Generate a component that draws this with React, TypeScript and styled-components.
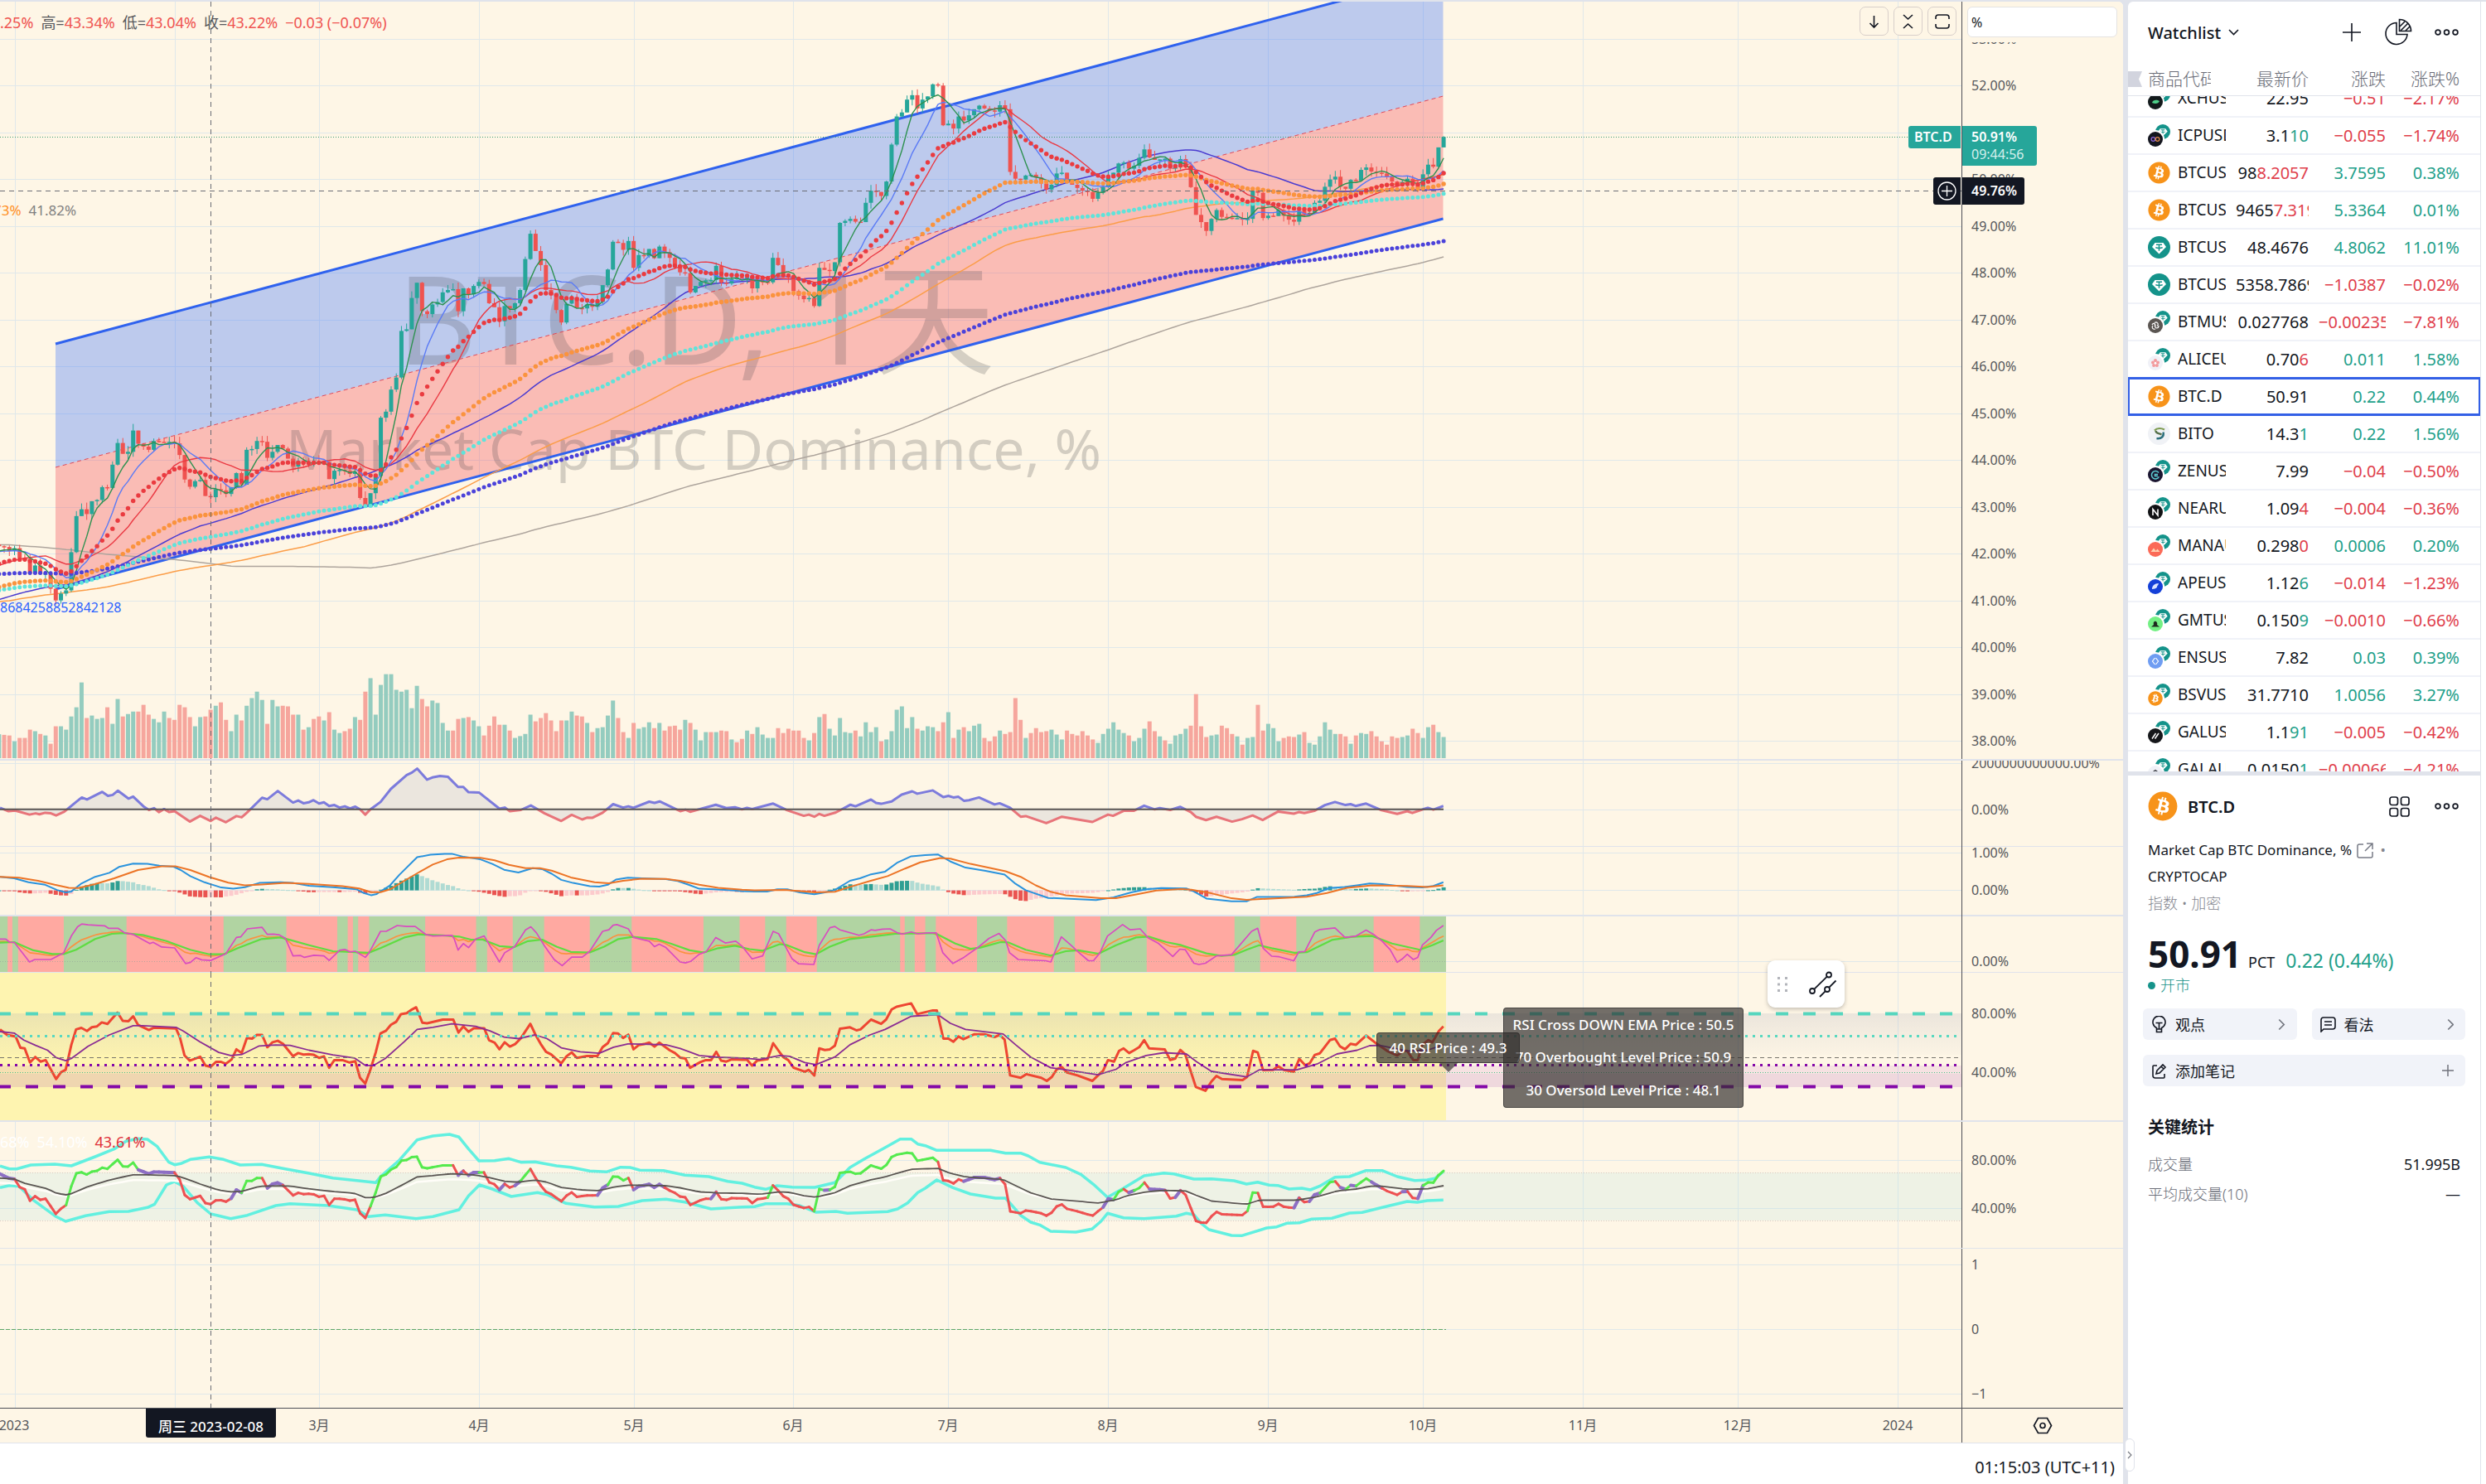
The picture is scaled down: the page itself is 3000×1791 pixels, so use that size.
import React from "react";
import styled, { createGlobalStyle, css } from "styled-components";
import { FaBitcoin } from "react-icons/fa";

/* ---------- theme ---------- */

const C = {
  cream: "#fef6e6",
  grid: "#e0e8ea",
  frame: "#e0e3eb",
  ink: "#131722",
  axis: "#4d4f57",
  label: "#55565b",
  up: "#26a69a",
  down: "#ef5350",
  textUp: "#22a08a",
  textDown: "#e0404c",
  blue: "#2962ff",
  muted: "#85878f",
};

const FONT = `"Noto Sans", "Noto Sans CJK SC", sans-serif`;

const Global = createGlobalStyle`
  * { box-sizing: border-box; }
  body { margin: 0; font-family: ${FONT}; color: ${C.ink}; background: ${C.frame}; }
  button, input { font-family: inherit; color: inherit; }
`;

/* ---------- series data ---------- */

type Pt = [number, number];

const DAY = 6.226;
const DAY0 = 17.5;
const FIRST = -3;
const LAST = 277;
const dayX = (d: number) => DAY0 + DAY * d;
const days = Array.from({ length: LAST - FIRST + 1 }, (_, i) => i + FIRST);

const parse = (s: string): Pt[] =>
  s.trim().split(/\s+/).map((p) => p.split(",").map(Number) as Pt);

const K_LEFT = 900 / 1568;
const K_RIGHT = 950 / 1568;

/* A series is stored as two blocks of samples; the second starts at x = 850. */
const series = (left: string, right: string, y0: number, ky: number): Pt[] => [
  ...parse(left).map(([x, y]) => [x * K_LEFT, y0 + y * ky] as Pt),
  ...parse(right).map(([x, y]) => [850 + x * K_RIGHT, y0 + y * ky] as Pt),
].sort((a, b) => a[0] - b[0]);

const at = (pts: Pt[], x: number) => {
  if (x <= pts[0][0]) return pts[0][1];
  for (let i = 1; i < pts.length; i++) {
    if (pts[i][0] >= x) {
      const [ax, ay] = pts[i - 1];
      const [bx, by] = pts[i];
      return bx === ax ? by : ay + ((by - ay) * (x - ax)) / (bx - ax);
    }
  }
  return pts[pts.length - 1][1];
};

const toPath = (pts: Pt[]) =>
  "M" + pts.map(([x, y]) => `${x.toFixed(1)},${y.toFixed(1)}`).join("L");

const daily = (pts: Pt[]) => days.map((d) => at(pts, dayX(d)));

const PRICE_K = 760 / 1568;
const closes = `1360 1362 1372 1365 1390 1392 1428 1408 1430 1428 1466 1495 1478 1470 1375 1285 1268 1280 1248 1245 1213 1215
1157 1103 1130 1125 1072 1105 1112 1120 1098 1100 1102 1100 1104 1133 1194 1212 1198 1195 1235 1238 1218 1221 1230 1213 1178
1207 1120 1118 1098 1100 1140 1125 1108 1117 1142 1162 1148 1153 1155 1150 1153 1152 1193 1172 1170 1172 1180 1175 1240 1262
1228 1185 1040 1025 970 940 824 820 742 704 775 782 758 752 728 722 720 775 718 733 712 702 707 755 765 800 762 768 755 722
645 582 625 660 722 735 772 803 756 740 767 768 758 764 752 710 671 602 605 622 600 667 635 638 620 643 614 628 642 660 678
680 728 712 702 698 697 662 704 706 695 691 692 690 718 700 702 703 642 660 688 690 725 736 745 742 762 667 672 675 653 555
550 545 552 553 505 475 478 488 452 360 290 280 248 237 270 248 240 210 213 312 308 320 290 300 287 272 263 270 275 278 262
272 428 445 447 437 435 442 457 472 460 432 430 455 460 468 475 478 495 480 466 442 430 407 405 420 413 393 372 392 398 397
395 420 416 396 415 466 535 553 575 545 523 540 542 545 543 547 545 475 480 543 537 538 523 537 547 552 525 533 530 505 500
465 447 440 465 470 448 450 423 417 427 430 432 440 452 462 453 445 458 468 434 410 415 367 341`
  .split(/\s+/).map((v) => Number(v) * PRICE_K);

const history = ([
  [12, 1180], [19, 870], [12, 850], [27, 1120], [50, 1500], [12, 1650],
  [45, 1462], [13, 1600], [27, 1510], [10, 1450], [10, 1375],
] as Pt[]).flatMap(([n, v]) => Array(n).fill(v * PRICE_K) as number[]);

const sma = (n: number): Pt[] => {
  const all = [...history, ...closes];
  return closes.map((_, i) => {
    const end = history.length + i + 1;
    const win = all.slice(Math.max(0, end - n), end);
    return [dayX(days[i]), win.reduce((a, b) => a + b, 0) / win.length];
  });
};

const ema = (n: number, seed: number): Pt[] => {
  let v = seed * PRICE_K;
  const a = 2 / (n + 1);
  return closes.map((c, i) => {
    v += a * (c - v);
    return [dayX(days[i]), v];
  });
};

/* Signed bar heights: positive for an up day, negative for a down day. */
const volumes = `78 -76 -74 55 -66 -66 -93 88 -79 74 -47 -104 104 93 136 166 247 -131 139 128 131 -166 112 193 -136 144 152
-152 -174 -142 128 117 152 -131 -125 -174 -166 -134 104 134 -136 -158 171 -182 -125 88 142 -123 171 196 217 190 -112 190 169
-171 -169 -142 142 -93 101 -128 -136 123 -150 93 82 -88 -96 134 -125 -217 261 142 239 274 274 223 217 223 163 236 -193 -169
188 180 115 90 -90 -128 131 -134 123 104 -74 -106 -136 -109 109 -90 66 72 79 142 -120 -131 -147 -123 -88 -123 123 152 -139
-136 115 -85 98 101 139 188 -131 -85 66 -115 96 101 117 -98 115 -90 -104 -106 -93 125 -115 93 58 85 -85 85 -90 -88 61 -52
-63 90 -79 101 77 66 66 -98 -82 -96 -90 -90 -66 58 -82 134 -144 96 74 131 85 82 -90 71 117 85 101 -55 61 88 158 169 98 134
-96 90 104 101 -88 -117 150 -66 93 -101 88 106 112 -66 -55 -71 90 -79 -85 -196 -125 66 -82 -98 -85 -88 93 77 61 -90 -79 -74
-88 -74 -61 50 79 96 117 93 82 -74 55 66 96 -120 -88 71 -58 47 74 79 96 -106 -209 -104 -69 74 77 -106 -98 -79 71 -44 66 69
-174 -90 112 98 55 -66 -71 -69 77 -85 50 44 71 117 93 79 -79 -71 47 -74 82 79 -88 -71 -55 -44 -71 -66 69 74 -96 -82 66 101
-109 85 69`.split(/\s+/).map(Number);

const Y0 = 780;
const KY = 580 / 1568;

const momentum = series(
  `0,527 18,538 32,536 62,549 75,545 83,548 95,543 107,545 118,552 135,540 160,508 172,493 183,500 215,475 227,488 237,485
  248,471 270,497 280,490 303,524 313,534 324,528 334,541 345,531 356,541 367,538 399,572 421,553 443,570 454,559 475,574
  497,554 508,558 519,543 551,494 562,499 584,472 616,510 627,503 638,512 649,509 659,502 671,513 681,509 692,521 703,518
  714,526 725,522 736,529 747,523 757,532 768,549 779,532 800,508 822,465 855,420 866,412 877,399 898,435 909,428 925,423
  942,426 963,459 974,459 985,476 1007,477 1050,530 1061,526 1072,538 1095,534 1116,519 1145,545 1180,570 1202,550 1224,565
  1234,559 1245,560 1267,543 1289,515 1310,526 1321,522 1332,527 1365,507 1376,511 1387,506 1430,538 1441,533 1451,540
  1505,517 1527,528 1545,525 1560,532`,
  `85,527 95,531 137,513 165,535 198,553 208,549 219,556 229,547 239,553 262,542 291,517 301,522 332,500 342,511 352,514
  373,506 393,484 414,473 424,481 455,470 476,492 486,488 496,493 506,491 517,504 527,502 547,493 578,516 588,512 609,527
  630,556 640,554 681,577 712,556 773,573 804,549 814,553 835,537 855,537 876,520 897,532 907,528 928,534 948,524 969,541
  979,556 999,567 1020,556 1051,572 1071,564 1092,552 1112,567 1143,539 1174,546 1184,541 1195,544 1215,537 1236,518
  1256,508 1277,518 1287,515 1297,521 1318,513 1349,535 1380,547 1400,538 1410,544 1431,532 1441,527 1452,533 1472,521`,
  Y0, KY
);

const macd = series(
  `0,752 30,757 60,770 95,778 120,795 138,803 150,800 170,775 200,752 230,739 250,720 280,709 310,710 335,716 365,719
  380,730 400,750 430,770 465,787 490,791 515,786 545,772 590,770 615,772 650,781 700,786 750,793 765,805 780,812 792,808
  820,780 840,745 877,688 905,680 935,677 950,677 975,687 1010,695 1035,710 1060,729 1090,738 1120,724 1140,727 1160,742
  1180,762 1205,772 1240,783 1260,784 1278,778 1295,761 1320,755 1350,757 1400,760 1425,766 1450,779 1470,791 1500,793
  1540,796 1560,799`,
  `100,800 125,800 145,793 165,793 190,803 219,809 240,803 260,795 290,765 310,757 330,745 360,735 385,705 412,685 440,681
  465,679 490,702 520,722 560,733 598,745 620,775 640,796 685,821 720,823 780,828 815,819 850,803 880,793 910,789 960,790
  975,800 1000,823 1050,832 1080,832 1100,818 1120,818 1175,817 1200,812 1220,805 1245,789 1275,785 1300,780 1325,774
  1350,776 1400,785 1430,787 1452,782 1472,770`,
  Y0, KY
);

const macdSignal = series(
  `0,752 40,755 80,765 115,778 145,788 165,789 200,776 240,757 290,730 340,718 370,718 400,730 440,753 480,771 515,780
  550,777 600,772 650,775 720,783 755,790 780,802 800,802 820,793 850,765 880,738 910,712 940,695 965,689 1010,690 1040,698
  1070,713 1105,724 1135,724 1160,732 1200,754 1250,770 1280,773 1310,765 1350,758 1400,759 1430,765 1470,778 1510,788
  1560,794`,
  `100,796 160,795 220,803 260,801 290,785 330,766 365,750 400,725 430,705 470,691 490,693 530,710 600,734 630,752 660,780
  690,801 720,812 790,822 820,822 860,810 900,797 950,792 970,794 1010,806 1050,822 1080,827 1200,817 1240,805 1280,788
  1330,780 1400,782 1440,785 1472,780`,
  Y0, KY
);

const trendFast = series(
  `0,955 12,955 20,965 30,966 62,1030 73,1022 107,1022 134,1000 150,945 163,915 172,906 185,909 220,912 228,920 248,920
  262,935 280,940 315,970 322,966 340,981 367,984 390,1035 400,1032 412,1016 424,1023 443,1025 475,1003 497,950 506,948
  520,922 551,917 562,940 575,939 586,941 600,953 616,1010 632,1009 640,1015 660,1008 681,1010 692,1025 714,992 725,989
  736,997 747,995 768,1015 776,1000 800,930 812,930 835,911 855,914 873,914 895,940 910,945 950,943 955,955 963,991 974,970
  985,983 1000,955 1018,945 1050,1030 1061,1000 1082,980 1105,925 1116,915 1128,935 1145,978 1165,1022 1182,1042 1202,1014
  1224,1014 1240,995 1267,930 1280,925 1289,910 1297,908 1321,922 1332,950 1365,962 1376,980 1386,972 1400,983 1430,1030
  1441,1033 1452,1028 1470,1005 1485,996 1505,950 1525,968 1547,962 1560,978`,
  `95,1020 116,1010 137,930 148,938 160,975 175,1020 188,1036 218,1038 229,975 250,918 260,914 270,925 308,943 318,938
  332,925 340,927 355,923 370,922 385,935 395,939 412,932 425,938 445,935 462,935 475,1000 495,1035 517,1015 547,980 567,953
  587,937 600,960 608,1000 625,1022 680,1026 690,1030 711,948 730,975 745,998 765,1026 775,1026 788,1000 803,945 833,908
  848,925 868,922 883,950 905,970 933,1012 947,988 958,990 975,1034 985,1038 998,1034 1020,1010 1050,1006 1090,930 1102,920
  1113,985 1130,1011 1145,1013 1174,1026 1184,997 1196,996 1216,932 1226,924 1256,919 1276,950 1297,946 1318,926 1333,940
  1350,962 1366,990 1380,1031 1390,1020 1400,1005 1412,1022 1421,1015 1430,975 1447,950 1458,927 1472,911`,
  Y0, KY
);

const trendSlow = series(
  `0,967 30,965 70,992 110,1004 134,1004 160,990 200,955 235,938 260,936 300,942 350,962 400,990 440,1005 470,1005 500,985
  550,955 590,950 610,958 650,975 700,995 775,1000 800,985 850,950 880,940 930,943 965,947 990,957 1015,957 1050,978
  1080,982 1110,962 1140,957 1170,980 1200,997 1240,999 1270,980 1300,955 1330,948 1380,955 1410,970 1450,992 1480,999
  1510,985 1545,977`,
  `90,988 116,993 150,972 165,975 200,998 222,1005 250,980 290,955 330,948 380,938 460,936 500,970 530,987 550,983 590,965
  605,966 640,990 690,1009 720,995 745,992 785,1003 820,975 860,950 885,947 920,965 950,975 1000,1002 1030,1010 1055,1007
  1080,990 1105,975 1130,985 1175,1000 1200,998 1250,958 1290,948 1330,945 1370,970 1425,990 1450,975 1472,960`,
  Y0, KY
);

const trendMid: Pt[] = daily(trendSlow).map((y, i) => [
  dayX(days[i]),
  y + 0.3 * (at(trendFast, dayX(days[i])) - y),
]);

const rsi = series(
  `0,1250 15,1268 33,1273 43,1310 52,1312 63,1358 74,1340 85,1355 96,1350 118,1412 128,1390 138,1382 150,1300 160,1250
  171,1245 183,1255 193,1243 204,1240 214,1227 226,1232 247,1195 258,1222 270,1223 280,1207 290,1235 313,1252 324,1244
  370,1247 378,1275 388,1335 399,1352 421,1339 432,1368 443,1372 454,1356 465,1356 475,1362 487,1348 497,1315 508,1327
  519,1278 530,1280 540,1268 551,1268 562,1308 573,1292 584,1287 595,1297 616,1337 627,1327 638,1332 649,1331 660,1333
  671,1343 681,1338 692,1375 703,1350 720,1350 735,1358 747,1354 757,1408 768,1427 779,1380 790,1325 800,1263 811,1255
  822,1235 833,1225 843,1200 855,1197 866,1185 875,1178 888,1228 898,1230 920,1222 931,1218 953,1218 964,1260 974,1240
  985,1258 996,1246 1018,1246 1028,1285 1040,1293 1050,1315 1061,1292 1072,1306 1083,1298 1094,1281 1115,1232 1126,1268
  1137,1298 1148,1323 1159,1332 1180,1361 1191,1338 1202,1325 1213,1343 1234,1337 1256,1337 1267,1308 1278,1295 1289,1262
  1299,1263 1310,1278 1321,1267 1332,1315 1343,1301 1354,1298 1365,1293 1376,1306 1386,1293 1408,1318 1419,1327 1430,1342
  1441,1345 1451,1375 1473,1356 1484,1350 1495,1350 1506,1323 1516,1352 1527,1355 1538,1348 1560,1349`,
  `85,1349 95,1368 105,1352 126,1347 137,1295 147,1318 157,1340 167,1350 178,1375 200,1388 208,1382 219,1400 229,1312
  240,1317 250,1315 260,1303 270,1248 290,1243 303,1253 311,1250 332,1218 352,1232 362,1218 373,1185 383,1176 412,1165
  424,1200 455,1188 463,1188 476,1280 486,1280 496,1290 506,1273 516,1282 537,1266 558,1266 578,1275 588,1268 598,1283
  609,1400 630,1408 641,1396 671,1408 682,1418 692,1405 702,1380 712,1373 722,1390 743,1400 773,1418 784,1400 794,1385
  804,1350 816,1355 826,1320 835,1312 846,1327 856,1318 866,1308 876,1285 886,1312 917,1315 928,1350 938,1345 948,1317
  958,1332 979,1438 998,1450 1010,1420 1020,1402 1031,1412 1072,1415 1081,1405 1093,1320 1102,1325 1113,1383 1133,1382
  1143,1370 1154,1382 1174,1388 1185,1346 1197,1367 1206,1360 1216,1333 1226,1328 1246,1285 1256,1280 1266,1305 1276,1315
  1287,1297 1298,1300 1318,1270 1340,1298 1360,1320 1380,1335 1392,1320 1400,1320 1412,1350 1421,1350 1430,1300 1442,1285
  1450,1292 1463,1255 1472,1240`,
  Y0, KY
);

const rsiMa = series(
  `0,1257 30,1262 50,1285 75,1302 100,1318 118,1342 138,1352 150,1345 185,1305 230,1268 280,1238 300,1238 370,1243 385,1255
  420,1290 460,1325 485,1335 508,1332 545,1304 580,1301 610,1302 650,1318 700,1333 745,1343 768,1367 785,1368 810,1345
  850,1290 877,1250 910,1243 950,1232 1000,1240 1030,1255 1060,1275 1090,1280 1125,1268 1150,1280 1180,1310 1220,1323
  1260,1328 1290,1308 1320,1297 1400,1300 1430,1312 1470,1335 1510,1341 1560,1343`,
  `110,1348 150,1335 170,1338 200,1358 222,1365 260,1340 290,1300 330,1268 360,1250 412,1207 465,1202 490,1230 520,1250
  595,1265 620,1300 650,1340 690,1375 720,1382 784,1398 820,1380 840,1358 880,1335 915,1326 960,1330 980,1355 1010,1387
  1080,1405 1105,1382 1180,1382 1220,1363 1260,1330 1300,1318 1325,1303 1345,1302 1400,1320 1440,1318 1472,1300`,
  Y0, KY
);

const bandTop = series(
  `0,202 20,212 35,212 65,198 115,195 150,201 200,168 240,140 265,112 290,103 310,105 330,130 355,188 367,197 380,193
  400,178 440,169 470,178 505,198 550,196 600,212 650,228 700,245 750,254 790,262 800,240 840,180 877,107 910,93 945,87
  965,97 985,140 1007,183 1040,182 1070,175 1095,188 1125,187 1170,201 1200,206 1240,220 1275,223 1305,206 1325,207
  1345,217 1395,218 1440,235 1490,240 1530,257 1560,264`,
  `100,278 122,286 145,273 175,278 220,279 260,262 290,207 320,175 360,135 390,104 412,104 425,122 440,128 463,145 570,145
  600,155 630,155 645,165 668,188 720,207 750,232 775,268 803,315 835,282 876,237 915,227 935,230 975,249 1010,248 1055,255
  1080,267 1102,260 1125,271 1142,272 1165,285 1190,282 1207,288 1225,275 1256,242 1285,240 1318,218 1350,218 1380,240
  1400,248 1415,254 1440,252 1455,247 1472,222`,
  1340, 1 / 3
);

const bandLow = series(
  `0,280 20,272 40,275 70,325 118,385 138,402 180,382 230,367 270,366 310,352 325,340 350,270 367,258 385,275 415,335
  443,375 485,392 520,380 580,345 610,338 690,345 750,360 775,385 810,379 875,392 910,385 965,360 985,310 1008,270 1035,285
  1075,312 1130,298 1150,305 1190,337 1250,350 1300,348 1350,327 1400,322 1440,332 1495,357 1560,350`,
  `100,349 122,338 165,338 190,345 222,369 262,366 285,373 365,367 385,357 405,335 425,298 440,282 463,252 495,280 530,303
  580,318 600,318 630,380 650,405 668,415 690,438 740,441 772,430 790,402 803,373 835,389 876,392 940,383 960,373 975,378
  990,410 1005,432 1050,453 1070,454 1120,426 1140,422 1160,409 1185,407 1210,394 1250,391 1285,372 1310,370 1350,352
  1400,330 1420,333 1440,327 1472,325`,
  1340, 1 / 3
);

/* Stretches of the trend pane that are shaded red. */
const bearish: Pt[] = [
  ...([[16, 26], [38, 134], [266, 470], [602, 709], [731, 742], [753, 776], [894, 1001], [1024, 1078], [1144, 1240],
    [1328, 1479], [1555, 1572]] as Pt[]).map(([a, b]) => [a * K_LEFT, b * K_LEFT] as Pt),
  ...([[78, 121], [163, 224], [390, 399], [419, 440], [461, 543], [603, 696], [738, 789], [881, 1056], [1107, 1179],
    [1333, 1425]] as Pt[]).map(([a, b]) => [850 + a * K_RIGHT, 850 + b * K_RIGHT] as Pt),
];

const months: [number, string][] = [
  [211, ""], [385, "3月"], [578, "4月"], [765, "5月"], [957, "6月"], [1144, "7月"], [1337, "8月"],
  [1530, "9月"], [1717, "10月"], [1910, "11月"], [2097, "12月"], [2290, "2024"],
];

/* ---------- layout ---------- */

const Page = styled.div`
  display: flex;
  gap: 6px;
  min-height: 100vh;
  padding-top: 2px;
  background: ${C.frame};
`;

const ChartColumn = styled.main`
  flex: 1;
  min-width: 0;
  display: flex;
  flex-direction: column;
  background: #fff;
  border-radius: 0 6px 0 0;
  overflow: hidden;
`;

const PaneRow = styled.section<{ $h: number; $sep: number }>`
  display: grid;
  grid-template-columns: minmax(0, 1fr) 195px;
  height: ${(p) => p.$h}px;
  border-bottom: ${(p) => p.$sep}px solid ${C.frame};
  background: ${C.cream};
`;

const Plot = styled.div`
  position: relative;
  min-width: 0;
`;

const Axis = styled.div`
  position: relative;
  border-left: 1px solid ${C.axis};
`;

const Canvas = styled.svg`
  display: block;
  width: 100%;
  height: 100%;
`;

const AxisText = styled.text`
  font: 16px ${FONT};
  fill: ${C.label};
`;

const CROSS_X = 254;

function Pane(props: {
  top: number;
  height: number;
  sep: number;
  rows: number[];
  labels: [number, string][];
  children?: React.ReactNode;
  overlay?: React.ReactNode;
  axisOverlay?: React.ReactNode;
}) {
  const { top, height } = props;
  return (
    <PaneRow $h={height} $sep={props.sep}>
      <Plot>
        <Canvas>
          <g transform={`translate(0,${-top})`}>
            <g stroke={C.grid} strokeWidth={1}>
              {[18, ...months.map((m) => m[0])].map((x) => (
                <line key={x} x1={x + 0.5} x2={x + 0.5} y1={top} y2={top + height} />
              ))}
              {props.rows.map((y) => (
                <line key={y} x1={0} x2="100%" y1={y + 0.5} y2={y + 0.5} />
              ))}
            </g>
            {props.children}
            <line x1={CROSS_X + 0.5} x2={CROSS_X + 0.5} y1={top} y2={top + height} stroke="#6b6d75" strokeDasharray="6 5" />
          </g>
        </Canvas>
        {props.overlay}
      </Plot>
      <Axis>
        <Canvas>
          {props.labels.map(([y, t]) => (
            <AxisText key={y} x={11} y={y - top + 6}>{t}</AxisText>
          ))}
        </Canvas>
        {props.axisOverlay}
      </Axis>
    </PaneRow>
  );
}

/* ---------- chart overlays ---------- */

const Legend = styled.div<{ $top: number; $left?: number; $size?: number }>`
  position: absolute;
  left: ${(p) => p.$left ?? 0}px;
  top: ${(p) => p.$top}px;
  display: flex;
  gap: 9px;
  font-size: ${(p) => p.$size ?? 18}px;
  line-height: 24px;
  white-space: nowrap;
  color: ${C.label};
`;

const Tone = styled.span<{ $c: string }>`
  color: ${(p) => p.$c};
`;

const ScaleButtons = styled.div`
  position: absolute;
  top: 6px;
  right: 6px;
  display: flex;
  gap: 6px;
`;

const ScaleButton = styled.button`
  width: 35px;
  height: 35px;
  padding: 0;
  display: grid;
  place-items: center;
  background: ${C.cream};
  border: 1px solid #d8cfca;
  border-radius: 7px;
`;

const ScaleField = styled.label`
  position: absolute;
  top: 0;
  left: 0;
  right: 0;
  padding: 6px 7px 6px 6px;
  background: ${C.cream};
  display: flex;
`;

const ScaleInput = styled.input`
  width: 100%;
  height: 37px;
  padding: 0 4px;
  font-size: 16px;
  background: #fff;
  border: 1px solid #e4e3e2;
  border-radius: 6px;
  outline: none;
`;

const Tag = styled.div<{ $top: number; $side: "left" | "right"; $bg: string; $w: number; $h: number }>`
  position: absolute;
  top: ${(p) => p.$top}px;
  ${(p) => (p.$side === "right" ? css`right: 1px; border-radius: 3px 0 0 3px;` : css`left: 0; border-radius: 0 3px 3px 0;`)}
  width: ${(p) => p.$w}px;
  height: ${(p) => p.$h}px;
  display: flex;
  flex-direction: column;
  justify-content: center;
  padding-left: ${(p) => (p.$side === "right" ? 7 : 11)}px;
  background: ${(p) => p.$bg};
  color: #fff;
  font-size: 16px;
  font-weight: 600;
  line-height: 21px;
  white-space: nowrap;
`;

const Countdown = styled.span`
  font-weight: 400;
  color: #d5efec;
`;

const AddAlert = styled.button`
  position: absolute;
  right: 1px;
  top: 212px;
  width: 33px;
  height: 33px;
  padding: 0;
  border: 0;
  display: grid;
  place-items: center;
  background: ${C.ink};
  border-radius: 3px 0 0 3px;
`;

const Callout = styled.div<{ $x: number; $y: number; $w: number; $h: number }>`
  position: absolute;
  left: ${(p) => p.$x}px;
  top: ${(p) => p.$y}px;
  width: ${(p) => p.$w}px;
  height: ${(p) => p.$h}px;
  display: flex;
  flex-direction: column;
  align-items: center;
  justify-content: space-around;
  background: rgba(48, 46, 44, 0.68);
  border: 1px solid rgba(30, 30, 30, 0.5);
  border-radius: 4px;
  color: #fff;
  font-size: 17px;
  font-weight: 500;
  line-height: 24px;
  white-space: nowrap;
`;

const CalloutTip = styled.i`
  position: absolute;
  top: 100%;
  left: 74px;
  border: 12px solid transparent;
  border-top-color: rgba(48, 46, 44, 0.68);
  border-bottom: 0;
`;

const DrawTools = styled.div`
  position: absolute;
  right: 141px;
  top: -15px;
  z-index: 2;
  width: 93px;
  height: 57px;
  display: flex;
  align-items: center;
  gap: 23px;
  padding-left: 12px;
  background: #fff;
  border-radius: 9px;
  box-shadow: 0 2px 5px rgba(60, 60, 60, 0.3);
`;

const PlainButton = styled.button`
  padding: 0;
  border: 0;
  background: none;
  display: inline-flex;
  align-items: center;
  justify-content: center;
`;

/* ---------- panes ---------- */

const priceRows = Array.from({ length: 16 }, (_, i) => Math.round(47 + i * 56.48));

const TOP_LINE: Pt[] = [[67, 415], [1741.5, -32]];
const MID_LINE: Pt[] = [[67, 564], [1741.5, 116]];
const LOW_LINE: Pt[] = [[67, 711], [1741.5, 264]];

const Curve = ({ pts, color, w = 1.5, dash }: { pts: Pt[]; color: string; w?: number; dash?: string }) => (
  <path d={toPath(pts)} fill="none" stroke={color} strokeWidth={w} strokeDasharray={dash} strokeLinejoin="round" />
);

const Dots = ({ pts, color, r = 2.5 }: { pts: Pt[]; color: string; r?: number }) => (
  <g fill={color}>
    {pts.map(([x, y]) => <circle key={x} cx={x} cy={y} r={r} />)}
  </g>
);

const Candles = () => (
  <g>
    {closes.map((c, i) => {
      const open = i ? closes[i - 1] : c - 2;
      const up = c <= open;
      const x = dayX(days[i]);
      const hi = Math.min(open, c);
      const lo = Math.max(open, c);
      return (
        <g key={i} fill={up ? C.up : C.down}>
          <rect x={x - 0.5} width={1} y={hi - ((i * 37) % 9)} height={lo - hi + ((i * 37) % 9) + ((i * 23) % 8)} />
          <rect x={x - 2.5} width={5} y={hi} height={Math.max(1.5, lo - hi)} />
        </g>
      );
    })}
  </g>
);

const Hatch = ({ y, color, w, dash, offset = 0 }: { y: number; color: string; w: number; dash: string; offset?: number }) => (
  <line x1={0} x2="100%" y1={y} y2={y} stroke={color} strokeWidth={w} strokeDasharray={dash} strokeDashoffset={offset} />
);

function PricePane() {
  return (
    <Pane
      top={2}
      height={916}
      sep={2}
      rows={priceRows}
      labels={priceRows.map((y, i) => [y, `${53 - i}.00%`])}
      overlay={
        <>
          <Legend $top={13}>
            <Tone $c={C.down}>.25%</Tone>
            <span>高=<Tone $c={C.down}>43.34%</Tone></span>
            <span>低=<Tone $c={C.down}>43.04%</Tone></span>
            <span>收=<Tone $c={C.down}>43.22%</Tone></span>
            <Tone $c={C.down}>−0.03 (−0.07%)</Tone>
          </Legend>
          <Legend $top={240} $left={-8} $size={17}>
            <Tone $c="#ff8f1f">73%</Tone>
            <Tone $c="#808080">41.82%</Tone>
          </Legend>
          <Legend $top={719} $size={16}>
            <Tone $c={C.blue}>8684258852842128</Tone>
          </Legend>
          <ScaleButtons>
            <ScaleButton aria-label="Move pane down">
              <svg width="15" height="24" viewBox="0 0 15 24" fill="none" stroke={C.ink} strokeWidth="1.6"><path d="M7.5 5v14M2.5 14l5 5 5-5" /></svg>
            </ScaleButton>
            <ScaleButton aria-label="Collapse pane">
              <svg width="15" height="24" viewBox="0 0 15 24" fill="none" stroke={C.ink} strokeWidth="1.6"><path d="M2 4l5.5 5L13 4M2 20l5.5-5 5.5 5" /></svg>
            </ScaleButton>
            <ScaleButton aria-label="Maximize pane">
              <svg width="18" height="20" viewBox="0 0 18 20" fill="none" stroke={C.ink} strokeWidth="1.6"><path d="M1 7V5a3 3 0 0 1 3-3h10a3 3 0 0 1 3 3v2M1 13v2a3 3 0 0 0 3 3h10a3 3 0 0 0 3-3v-2" /></svg>
            </ScaleButton>
          </ScaleButtons>
          <Tag $top={150} $side="right" $bg={C.up} $w={63} $h={27}>BTC.D</Tag>
          <AddAlert aria-label="Add alert">
            <svg width="23" height="23" viewBox="0 0 23 23" fill="none" stroke="#fff" strokeWidth="1.3"><circle cx="11.5" cy="11.5" r="10.5" /><path d="M11.5 5v13M5 11.5h13" /></svg>
          </AddAlert>
        </>
      }
      axisOverlay={
        <>
          <ScaleField>
            <ScaleInput aria-label="Scale unit" defaultValue="%" />
          </ScaleField>
          <Tag $top={150} $side="left" $bg={C.up} $w={90} $h={48}>
            <span>50.91%</span>
            <Countdown>09:44:56</Countdown>
          </Tag>
          <Tag $top={212} $side="left" $bg={C.ink} $w={75} $h={33}>49.76%</Tag>
        </>
      }
    >
      <path d={`${toPath([TOP_LINE[0], TOP_LINE[1], MID_LINE[1], MID_LINE[0]])}Z`} fill="rgba(41,98,255,.3)" />
      <path d={`${toPath([MID_LINE[0], MID_LINE[1], LOW_LINE[1], LOW_LINE[0]])}Z`} fill="rgba(242,54,69,.3)" />
      <text x={840} y={440} textAnchor="middle" fontFamily={FONT} fontSize={148} fill="rgba(70,70,75,.22)">BTC.D, 1天</text>
      <text x={837} y={567} textAnchor="middle" fontFamily={FONT} fontSize={68} fill="rgba(70,70,75,.23)">Market Cap BTC Dominance, %</text>
      {volumes.map((v, i) => {
        const h = Math.abs(v) * KY;
        return <rect key={i} x={dayX(days[i]) - 2.5} width={5} y={915 - h} height={h} fill={v > 0 ? "#94ccbf" : "#f6a69d"} />;
      })}
      <Curve pts={TOP_LINE} color="#2f62ee" w={3} />
      <Curve pts={MID_LINE} color="#e04a58" w={1} dash="5 4" />
      <Curve pts={LOW_LINE} color="#2f62ee" w={3} />
      <Curve pts={sma(240)} color="#aea59d" />
      <Curve pts={sma(120)} color="#fb9d48" />
      <Curve pts={sma(60)} color="#4a3bd0" />
      <Candles />
      <Curve pts={sma(20)} color="#ea3943" w={1.4} />
      <Curve pts={sma(10)} color="#5b7bf5" w={1.4} />
      <Curve pts={sma(5)} color="#2e9150" w={1.4} />
      <Dots pts={ema(200, 1430)} color="#4b42da" />
      <Dots pts={ema(100, 1472)} color="#5fe3da" />
      <Dots pts={ema(60, 1465)} color="#fa933e" r={2.7} />
      <Dots pts={ema(20, 1408)} color="#ea3b40" r={2.7} />
      <Hatch y={165.5} color="#3f9c74" w={1} dash="1 2" />
      <Hatch y={230.5} color="#6b6d75" w={1} dash="6 5" />
    </Pane>
  );
}

function MomentumPane() {
  const zero = 976.8;
  return (
    <Pane top={918} height={104} sep={1} rows={[921, 977]} labels={[[921, "2000000000000.00%"], [977, "0.00%"]]}>
      <clipPath id="above"><rect x={0} y={918} width={1742} height={zero - 918} /></clipPath>
      <clipPath id="below"><rect x={0} y={zero} width={1742} height={46} /></clipPath>
      <path d={`${toPath([[0, zero], ...momentum, [1742, zero]])}Z`} fill="#ebe6de" />
      <g clipPath="url(#above)"><Curve pts={momentum} color="#7c7bdc" w={3} /></g>
      <g clipPath="url(#below)"><Curve pts={momentum} color="#e8747a" w={3} /></g>
      <line x1={0} x2={1742} y1={zero} y2={zero} stroke="#5a5554" strokeWidth={2} />
    </Pane>
  );
}

function MacdPane() {
  const zero = 1074.6;
  const hist = days.map((d) => at(macdSignal, dayX(d)) - at(macd, dayX(d)));
  return (
    <Pane top={1022} height={84} sep={2} rows={[1029, 1074]} labels={[[1029, "1.00%"], [1074, "0.00%"]]}>
      {hist.map((h, i) => {
        const rising = i === 0 || h >= hist[i - 1];
        const fill = h >= 0 ? (rising ? "#2f9f93" : "#b0dbd3") : rising ? "#fccbcd" : "#ea5451";
        return <rect key={i} x={dayX(days[i]) - 2.5} width={5} y={h > 0 ? zero - h : zero} height={Math.max(1, Math.abs(h))} fill={fill} />;
      })}
      <Curve pts={macd} color="#2a93dd" w={2} />
      <Curve pts={macdSignal} color="#ec7426" w={2} />
    </Pane>
  );
}

function TrendPane() {
  return (
    <Pane top={1106} height={68} sep={1} rows={[1160]} labels={[[1160, "0.00%"]]}>
      <rect x={0} y={1106} width={1745} height={67} fill="#b1d4a2" />
      {bearish.map(([a, b]) => <rect key={a} x={a} y={1106} width={b - a} height={67} fill="#ffa9a1" />)}
      <line x1={0} x2={1745} y1={1160.5} y2={1160.5} stroke="#8f9f98" strokeOpacity={0.6} strokeDasharray="1 2" />
      <Curve pts={trendMid} color="#fb9140" w={1.7} />
      <Curve pts={trendSlow} color="#5fdc42" w={2.2} />
      <Curve pts={trendFast} color="#d94cc0" w={1.7} />
    </Pane>
  );
}

function RsiPane() {
  return (
    <Pane
      top={1174}
      height={180}
      sep={2}
      rows={[]}
      labels={[[1223, "80.00%"], [1294, "40.00%"]]}
      overlay={
        <>
          <DrawTools>
            <svg width="13" height="20" viewBox="0 0 13 20" fill="#b3b5bb">
              {[1, 8.5, 16].map((y) => [0, 9].map((x) => <rect key={`${x}-${y}`} x={x} y={y} width="3" height="3" />))}
            </svg>
            <PlainButton aria-label="Parallel channel">
              <svg width="36" height="36" viewBox="0 0 36 36" fill="none" stroke={C.ink} strokeWidth="1.8">
                <circle cx="26" cy="6.5" r="3" /><circle cx="6" cy="26" r="3" /><circle cx="24" cy="24" r="3" />
                <path d="M23.8 8.6 8.2 23.9M26.1 21.9l8.4-8.4M21.9 26.1l-6.9 6.9" />
              </svg>
            </PlainButton>
          </DrawTools>
          <Callout $x={1814} $y={42} $w={290} $h={121}>
            <span>RSI Cross DOWN EMA Price : 50.5</span>
            <span>70 Overbought Level Price : 50.9</span>
            <span>30 Oversold Level Price : 48.1</span>
          </Callout>
          <Callout $x={1661} $y={72} $w={173} $h={37}>
            <span>40 RSI Price : 49.3</span>
            <CalloutTip />
          </Callout>
        </>
      }
    >
      <rect x={0} y={1174} width={1745} height={178} fill="#fef4b0" />
      <linearGradient id="overbought" x1="0" y1="0" x2="0" y2="1">
        <stop offset="0" stopColor="#a0a0b4" stopOpacity=".2" />
        <stop offset="1" stopColor="#b0b0b4" stopOpacity=".04" />
      </linearGradient>
      <rect x={0} y={1223} width="100%" height={50} fill="url(#overbought)" />
      <rect x={0} y={1286} width="100%" height={26} fill="rgba(190,80,200,.12)" />
      <rect x={0} y={1296} width="100%" height={16} fill="rgba(160,90,150,.07)" />
      <Curve pts={rsi} color="#ee4632" w={3} />
      <Curve pts={rsiMa} color="#8a2c93" w={1.8} />
      <Hatch y={1223.5} color="#55d6be" w={4} dash="15 18" offset={2} />
      <Hatch y={1250.5} color="#5ad8c0" w={3} dash="3 6" />
      <Hatch y={1276.5} color="#77756e" w={1} dash="5 4" />
      <Hatch y={1285.5} color="#8408a8" w={3} dash="3 6" />
      <Hatch y={1294.5} color="#4cc08a" w={1} dash="1 2" />
      <Hatch y={1311.5} color="#8408a8" w={4} dash="15 18" offset={2} />
    </Pane>
  );
}

const bandY = (y: number) => 1458.7 + (y - 1294) * 0.824;
const calm = (y: number, k: number) => 1430 + (bandY(y) - 1430) * k;

function BandsPane() {
  const xs = days.map(dayX);
  const line = xs.map((x) => bandY(at(rsi, x)));
  const mid = xs.map((x) => calm(at(rsiMa, x), 0.7));
  return (
    <Pane
      top={1354}
      height={153}
      sep={1}
      rows={[1400, 1458]}
      labels={[[1400, "80.00%"], [1458, "40.00%"]]}
      overlay={
        <Legend $top={12}>
          <Tone $c="#fff">68%</Tone>
          <Tone $c="#fff">54.10%</Tone>
          <Tone $c="#e0303a">43.61%</Tone>
        </Legend>
      }
    >
      <rect x={0} y={1415} width="100%" height={58} fill="rgba(190,230,225,.24)" />
      <Hatch y={1415.5} color="#dcc8c0" w={1} dash="1 2" />
      <Hatch y={1473.5} color="#dcc8c0" w={1} dash="1 2" />
      <Curve pts={bandTop} color="#62f0e0" w={3.5} />
      <Curve pts={bandLow} color="#62f0e0" w={3.5} />
      <Curve pts={xs.map((x, i) => [x, (mid[i] - 1430) * 0.8 + 1434] as Pt)} color="#fffdf8" w={2.5} />
      {line.slice(1).map((y, i) => {
        const diff = mid[i + 1] - y;
        const slope = line[i] - y;
        const color = diff > 5 ? "#55ea4e" : diff < -3.5 || slope < -4 ? "#ee5152" : "#8d6fc4";
        return (
          <line key={i} x1={xs[i]} y1={line[i]} x2={xs[i + 1]} y2={y} stroke={color} strokeWidth={color === "#8d6fc4" ? 4 : 3} strokeLinecap="round" />
        );
      })}
      <Curve pts={xs.map((x, i) => [x, mid[i]] as Pt)} color="#5a5552" w={1.8} />
    </Pane>
  );
}

function SignalPane() {
  return (
    <Pane top={1507} height={192} sep={0} rows={[1526, 1604, 1682]} labels={[[1526, "1"], [1604, "0"], [1682, "−1"]]}>
      <line x1={0} x2={1745} y1={1604.5} y2={1604.5} stroke="#5fa867" strokeDasharray="5 2" />
    </Pane>
  );
}

const TimeRow = styled.div`
  display: grid;
  grid-template-columns: minmax(0, 1fr) 195px;
  height: 43px;
  border-top: 1px solid ${C.axis};
  border-bottom: 1px solid ${C.frame};
  background: ${C.cream};
`;

const TimeAxis = styled.div`
  position: relative;
  overflow: hidden;
`;

const AxisCorner = styled.div`
  border-left: 1px solid ${C.axis};
  display: grid;
  place-items: center;
`;

const DateTag = styled.div`
  position: absolute;
  left: ${CROSS_X - 78}px;
  top: 0;
  width: 157px;
  height: 35px;
  display: flex;
  align-items: center;
  justify-content: center;
  padding-top: 5px;
  background: ${C.ink};
  border-radius: 0 0 3px 3px;
  color: #fff;
  font-size: 17px;
  font-weight: 500;
  white-space: nowrap;
`;

const Footer = styled.footer`
  flex: 1;
  display: flex;
  align-items: center;
  justify-content: flex-end;
  padding: 8px 10px 0 0;
  background: #fff;
  font-size: 20px;
`;

/* ---------- sidebar ---------- */

const Sidebar = styled.aside`
  position: relative;
  width: 432px;
  flex: none;
  padding-right: 6px;
  background: #fff;
  border-radius: 6px 0 0 0;
`;

const SidebarBody = styled.div`
  display: flex;
  flex-direction: column;
  height: 100%;
  border-right: 1px solid ${C.frame};
`;

const ListPanel = styled.section`
  height: 934px;
  overflow: hidden;
  border-bottom: 5px solid ${C.frame};
`;

const BarHead = styled.header`
  display: flex;
  align-items: center;
  height: 74px;
  padding: 0 26px 0 24px;
`;

const ListName = styled.button`
  display: flex;
  align-items: center;
  gap: 9px;
  margin-right: auto;
  padding: 0;
  border: 0;
  background: none;
  font-size: 20px;
  font-weight: 500;
`;

const HeadTools = styled.div<{ $gap: number }>`
  display: flex;
  align-items: center;
  gap: ${(p) => p.$gap}px;
`;

const Quotes = styled.table`
  width: 425px;
  table-layout: fixed;
  border-collapse: collapse;
  font-size: 20px;
`;

const Col = styled.col<{ $w: number }>`
  width: ${(p) => p.$w}px;
`;

const HeadCell = styled.th`
  height: 39px;
  padding: 0;
  border-bottom: 1px solid ${C.frame};
  font-size: 21px;
  line-height: 30px;
  font-weight: 300;
  color: #6a6d78;
  text-align: right;
  white-space: nowrap;
  overflow: hidden;
  &:last-child { padding-right: 25px; }
`;

const SymbolHead = styled.div`
  display: flex;
  align-items: center;
  gap: 7px;
  width: 100px;
  overflow: hidden;
  svg { flex: none; }
`;

const Row = styled.tr<{ $active?: boolean }>`
  ${(p) => p.$active && css`outline: 3px solid #3360e6; outline-offset: -2px;`}
`;

const Cell = styled.td`
  padding: 0 0 0 12px;
  border-bottom: 2px solid #f0f2f8;
  &:first-child { padding-left: 24px; }
  &:last-child { padding-right: 25px; }
`;

const Window = styled.div<{ $cut?: boolean }>`
  display: flex;
  align-items: flex-end;
  height: ${(p) => (p.$cut ? 24 : 43)}px;
  overflow: hidden;
`;

const Symbol = styled.div`
  display: flex;
  align-items: center;
  gap: 9px;
  height: 43px;
  flex: none;
`;

const SymbolName = styled.span`
  width: 58px;
  font-size: 19px;
  overflow: hidden;
  white-space: nowrap;
`;

const Num = styled.div<{ $tone?: "up" | "down" }>`
  margin-left: auto;
  max-width: 100%;
  line-height: 43px;
  overflow: hidden;
  white-space: nowrap;
  color: ${(p) => (p.$tone === "up" ? C.textUp : p.$tone === "down" ? C.textDown : "inherit")};
`;

const IconSlot = styled.span`
  position: relative;
  flex: none;
  width: 27px;
  height: 27px;
  svg { display: block; }
`;

const Coin = styled.span<{ $s: number }>`
  display: block;
  width: ${(p) => p.$s}px;
  height: ${(p) => p.$s}px;
  border-radius: 50%;
  background: #fff;
  color: #f7931a;
  svg { display: block; width: 100%; height: 100%; }
`;

const QuoteCoin = styled.span`
  position: absolute;
  right: 0;
  top: 0;
`;

const BaseCoin = styled.span`
  position: absolute;
  left: -2px;
  bottom: -2px;
  padding: 2px;
  border-radius: 50%;
  background: #fff;
`;

const Tether = ({ size }: { size: number }) => (
  <svg width={size} height={size} viewBox="0 0 27 27">
    <circle cx="13.5" cy="13.5" r="13.5" fill="#14938a" />
    <path d="M8.500 8h10l3.500 5-8.500 8.500L5 13z" fill="#fff" />
    <path d="M10 10.200h7M13.500 10.200v7.600M9.300 13.600c2 1.200 6.400 1.200 8.400 0" stroke="#14938a" strokeWidth="1.5" fill="none" />
  </svg>
);

const Bitcoin = ({ size = 27 }: { size?: number }) => (
  <Coin $s={size}><FaBitcoin /></Coin>
);

const small: Record<string, [string, React.ReactNode]> = {
  xch: ["#131a1c", <path key="a" d="M5 10c1-4 6-4 9-2-1 3-5 4-9 2z" fill="#4fd08a" />],
  icp: ["#14161f", <g key="a" fill="none" strokeWidth="1.3"><circle cx="6.4" cy="9" r="2.3" stroke="#8a63d8" /><circle cx="11.6" cy="9" r="2.3" stroke="#e08a4c" /></g>],
  btm: ["#5b5652", <path key="a" d="M5 8c2-4 5 0 3 2M8 5.500c3-2 6 2 3 4M13 9c0 4-5 4-4 0M9 13c-3 1-5-2-3-4" stroke="#fff" strokeWidth="1.2" fill="none" />],
  alice: ["#f0f1f7", <g key="a" fill="#f39a9c"><circle cx="9" cy="6" r="2" /><circle cx="12" cy="8.4" r="2" /><circle cx="10.9" cy="12" r="2" /><circle cx="7.1" cy="12" r="2" /><circle cx="6" cy="8.4" r="2" /><circle cx="9" cy="9.3" r="1.2" fill="#fff" /></g>],
  zen: ["#1b1630", <path key="a" d="M13 6.500a4.700 4.700 0 1 0 .4 4.700M12 8.500H8.500v2H12" stroke="#5ccad0" strokeWidth="1.5" fill="none" />],
  near: ["#111214", <path key="a" d="M6 13V5.500l6 7.500V5.500" stroke="#fff" strokeWidth="1.6" fill="none" />],
  mana: ["#fb6a57", <path key="a" d="M3.500 12 7 7.500l3.500 4.500zM8.500 12l3-3.500 3 3.500z" fill="#ffd0b0" />],
  ape: ["#1440d8", <path key="a" d="M5 12c0-4 3-7 8-7-1 2 0 2-2 3 1 1-1 4-6 4z" fill="#dbe4ff" />],
  gmt: ["#74f084", <path key="a" d="M4 12.500h10l-3-2.500c1-2-1-5-3-4s-1 3-1 4z" fill="#1d2a1f" />],
  ens: ["#6f9df2", <path key="a" d="M8.500 5 5.500 9l3 4M9.500 5l3 4-3 4" stroke="#fff" strokeWidth="1.2" fill="none" />],
  gal: ["#15171a", <path key="a" d="M5 12.500 9.500 6M8.500 12.500 13 6" stroke="#fff" strokeWidth="1.5" />],
  gala: ["#f0f1f7", <path key="a" d="M4.500 9 9 5.500 13.500 9M9 9v4" stroke="#33363d" strokeWidth="1.3" fill="none" />],
};

function SymbolIcon({ kind }: { kind: string }) {
  if (kind === "btc") return <IconSlot><Bitcoin /></IconSlot>;
  if (kind === "usdt") return <IconSlot><Tether size={27} /></IconSlot>;
  if (kind === "bito")
    return (
      <IconSlot>
        <svg width="27" height="27" viewBox="0 0 27 27" fill="none" strokeWidth="2.4">
          <circle cx="13.5" cy="13.5" r="13.5" fill="#f0f2f6" />
          <path d="M8 9.500c3-3 8-3 12-1" stroke="#7f9c52" />
          <path d="M9.500 10c0 3 4 3 7 4.500" stroke="#55704a" />
          <path d="M18.500 11.500c1.500 5-2.500 8.500-8 7.500" stroke="#2c6f7c" />
        </svg>
      </IconSlot>
    );
  return (
    <IconSlot>
      <QuoteCoin><Tether size={18} /></QuoteCoin>
      <BaseCoin>
        {kind === "bsv" ? (
          <Bitcoin size={18} />
        ) : (
          <svg width="18" height="18" viewBox="0 0 18 18">
            <circle cx="9" cy="9" r="9" fill={small[kind][0]} />
            {small[kind][1]}
          </svg>
        )}
      </BaseCoin>
    </IconSlot>
  );
}

type Quote = [icon: string, name: string, price: string, tail: string, tailTone: "up" | "down", chg: string, pct: string];

const quotes: Quote[] = [
  ["xch", "XCHUSDT", "22.95", "", "up", "−0.51", "−2.17%"],
  ["icp", "ICPUSDT", "3.1", "10", "up", "−0.055", "−1.74%"],
  ["btc", "BTCUSD", "98", "8.2057", "down", "3.7595", "0.38%"],
  ["btc", "BTCUSD", "9465", "7.319", "down", "5.3364", "0.01%"],
  ["usdt", "BTCUSDT", "48.4676", "", "up", "4.8062", "11.01%"],
  ["usdt", "BTCUSDT", "5358.7869", "", "up", "−1.0387", "−0.02%"],
  ["btm", "BTMUSDT", "0.027768", "", "up", "−0.00235", "−7.81%"],
  ["alice", "ALICEUSDT", "0.70", "6", "down", "0.011", "1.58%"],
  ["btc", "BTC.D", "50.91", "", "up", "0.22", "0.44%"],
  ["bito", "BITO", "14.3", "1", "up", "0.22", "1.56%"],
  ["zen", "ZENUSDT", "7.99", "", "up", "−0.04", "−0.50%"],
  ["near", "NEARUSDT", "1.09", "4", "down", "−0.004", "−0.36%"],
  ["mana", "MANAUSDT", "0.298", "0", "down", "0.0006", "0.20%"],
  ["ape", "APEUSDT", "1.12", "6", "up", "−0.014", "−1.23%"],
  ["gmt", "GMTUSDT", "0.150", "9", "up", "−0.0010", "−0.66%"],
  ["ens", "ENSUSDT", "7.82", "", "up", "0.03", "0.39%"],
  ["bsv", "BSVUSDT", "31.7710", "", "up", "1.0056", "3.27%"],
  ["gal", "GALUSDT", "1.1", "91", "up", "−0.005", "−0.42%"],
  ["gala", "GALAUSDT", "0.0150", "1", "up", "−0.00066", "−4.21%"],
];

const DotsIcon = () => (
  <svg width="29" height="10" viewBox="0 0 29 10" fill="none" stroke={C.ink} strokeWidth="1.7">
    <circle cx="4" cy="5" r="2.9" /><circle cx="14.5" cy="5" r="2.9" /><circle cx="25" cy="5" r="2.9" />
  </svg>
);

function Watchlist() {
  return (
    <ListPanel>
      <BarHead>
        <ListName>
          Watchlist
          <svg width="13" height="8" viewBox="0 0 13 8" fill="none" stroke={C.ink} strokeWidth="1.6"><path d="M1 1l5.500 5.500L12 1" /></svg>
        </ListName>
        <HeadTools $gap={27}>
          <PlainButton aria-label="Add symbol">
            <svg width="24" height="24" viewBox="0 0 24 24" stroke={C.ink} strokeWidth="1.6"><path d="M12 1v22M1 12h22" /></svg>
          </PlainButton>
          <PlainButton aria-label="Advanced view">
            <svg width="34" height="34" viewBox="0 0 34 34" fill="none" stroke={C.ink} strokeWidth="1.6">
              <path d="M15 5.500a13 13 0 1 0 13 14H15z" />
              <path d="M18.500 1.500v14h14a14 14 0 0 0-14-14z" />
              <path d="M19 10l6-6M20 15l9-9M26 15l5-5" />
            </svg>
          </PlainButton>
          <PlainButton aria-label="More"><DotsIcon /></PlainButton>
        </HeadTools>
      </BarHead>
      <Quotes>
        <colgroup>
          <Col $w={118} /><Col $w={100} /><Col $w={93} /><Col $w={114} />
        </colgroup>
        <thead>
          <tr>
            <HeadCell scope="col">
              <SymbolHead>
                <svg width="17" height="19" viewBox="0 0 17 19"><path d="M0 0h17l-4 9.500 4 9.500H0z" fill="#d2d4de" /></svg>
                商品代码
              </SymbolHead>
            </HeadCell>
            <HeadCell scope="col">最新价</HeadCell>
            <HeadCell scope="col">涨跌</HeadCell>
            <HeadCell scope="col">涨跌%</HeadCell>
          </tr>
        </thead>
        <tbody>
          {quotes.map(([icon, name, price, tail, tailTone, chg, pct], i) => {
            const tone = chg.startsWith("−") ? "down" : "up";
            const cut = i === 0;
            return (
              <Row key={i} $active={name === "BTC.D"}>
                <Cell><Window $cut={cut}><Symbol><SymbolIcon kind={icon} /><SymbolName>{name}</SymbolName></Symbol></Window></Cell>
                <Cell><Window $cut={cut}><Num>{price}<Tone $c={tailTone === "up" ? C.textUp : C.textDown}>{tail}</Tone></Num></Window></Cell>
                <Cell><Window $cut={cut}><Num $tone={tone}>{chg}</Num></Window></Cell>
                <Cell><Window $cut={cut}><Num $tone={tone}>{pct}</Num></Window></Cell>
              </Row>
            );
          })}
        </tbody>
      </Quotes>
    </ListPanel>
  );
}

const DetailName = styled.h2`
  margin: 0 auto 0 12px;
  font-size: 20px;
  font-weight: 600;
`;

const About = styled.div`
  padding: 0 24px;
  font-size: 17px;
  line-height: 32px;
`;

const AboutLink = styled.a`
  display: inline-flex;
  align-items: center;
  gap: 6px;
  margin-right: 4px;
  color: inherit;
  text-decoration: none;
`;

const Muted = styled.div`
  color: ${C.muted};
  font-size: 18px;
  font-weight: 300;
`;

const PriceLine = styled.div`
  display: flex;
  align-items: baseline;
  padding: 31px 24px 0;
  line-height: 28px;
`;

const BigPrice = styled.strong`
  font-size: 44px;
  font-weight: 700;
`;

const Unit = styled.span`
  margin: 0 13px 0 8px;
  font-size: 18px;
`;

const Change = styled.span`
  font-size: 23px;
  color: ${C.textUp};
`;

const Status = styled.div`
  display: flex;
  align-items: center;
  gap: 6px;
  padding: 0 24px;
  color: #15938a;
  font-size: 18px;
  font-weight: 300;
  line-height: 28px;
`;

const Bullet = styled.i`
  width: 9px;
  height: 9px;
  border-radius: 50%;
  background: #15938a;
`;

const Actions = styled.div`
  display: grid;
  grid-template-columns: 1fr 1fr;
  gap: 18px;
  padding: 14px 18px 0;
`;

const Action = styled.button<{ $wide?: boolean }>`
  ${(p) => p.$wide && css`grid-column: 1 / -1;`}
  display: flex;
  align-items: center;
  gap: 10px;
  height: 38px;
  padding: 0 14px 0 10px;
  border: 0;
  border-radius: 6px;
  background: #f1f3f9;
  font-size: 18px;
  font-weight: 400;
`;

const ActionText = styled.span`
  margin-right: auto;
`;

const Stats = styled.dl`
  display: grid;
  grid-template-columns: 1fr auto;
  margin: 0;
  padding: 0 24px;
  font-size: 18px;
  line-height: 36px;
`;

const StatsTitle = styled.h3`
  margin: 0;
  padding: 32px 24px 8px;
  font-size: 20px;
  line-height: 36px;
  font-weight: 700;
`;

const StatName = styled.dt`
  color: #6a6d78;
  font-weight: 300;
`;

const StatValue = styled.dd`
  margin: 0;
  text-align: right;
`;

const Handle = styled.button`
  position: absolute;
  left: -4px;
  top: 1734px;
  width: 12px;
  height: 40px;
  padding: 0;
  display: grid;
  place-items: center;
  background: #fff;
  border: 1px solid ${C.frame};
  border-radius: 6px;
`;

const Chevron = ({ size = 15 }: { size?: number }) => (
  <svg width={size / 2 + 1} height={size} viewBox="0 0 8 15" fill="none" stroke="#70737c" strokeWidth="1.6"><path d="M1 1.500l6 6-6 6" /></svg>
);

function Details() {
  return (
    <section>
      <BarHead>
        <Bitcoin size={36} />
        <DetailName>BTC.D</DetailName>
        <HeadTools $gap={30}>
          <PlainButton aria-label="Layout">
            <svg width="25" height="25" viewBox="0 0 25 25" fill="none" stroke={C.ink} strokeWidth="1.7">
              {[1, 14.5].map((y) => [1, 14.5].map((x) => <rect key={`${x}${y}`} x={x} y={y} width="9.5" height="9.5" rx="2.5" />))}
            </svg>
          </PlainButton>
          <PlainButton aria-label="More"><DotsIcon /></PlainButton>
        </HeadTools>
      </BarHead>
      <About>
        <div>
          <AboutLink href="#symbol">
            Market Cap BTC Dominance, %
            <svg width="20" height="19" viewBox="0 0 20 19" fill="none" stroke="#787b86" strokeWidth="1.5">
              <path d="M8 2H3a2 2 0 0 0-2 2v12a2 2 0 0 0 2 2h14a2 2 0 0 0 2-2v-5M12 1h7v7M19 1 10 10" />
            </svg>
          </AboutLink>
          <Tone $c={C.muted}> •</Tone>
        </div>
        <div>CRYPTOCAP</div>
        <Muted>指数 • 加密</Muted>
      </About>
      <PriceLine>
        <BigPrice>50.91</BigPrice>
        <Unit>PCT</Unit>
        <Change>0.22 (0.44%)</Change>
      </PriceLine>
      <Status><Bullet />开市</Status>
      <Actions>
        <Action>
          <svg width="19" height="21" viewBox="0 0 19 21" fill="none" stroke={C.ink} strokeWidth="1.6">
            <path d="M6.500 16v-1.500a7.500 7.500 0 1 1 6 0V16zM6.500 16v3.500h6V16M5.500 8.500h8M9.500 8.500V16" />
          </svg>
          <ActionText>观点</ActionText>
          <Chevron />
        </Action>
        <Action>
          <svg width="19" height="19" viewBox="0 0 19 19" fill="none" stroke={C.ink} strokeWidth="1.6">
            <path d="M1 18V4a3 3 0 0 1 3-3h11a3 3 0 0 1 3 3v8a3 3 0 0 1-3 3H4zM5 6h9M5 10h9" />
          </svg>
          <ActionText>看法</ActionText>
          <Chevron />
        </Action>
        <Action $wide>
          <svg width="19" height="19" viewBox="0 0 19 19" fill="none" stroke={C.ink} strokeWidth="1.6">
            <path d="M7 3H3a1 1 0 0 0-1 1v11a3 3 0 0 0 3 3h10a1 1 0 0 0 1-1v-4M7 9l7-7 3 3-7 7-4 1zM12 4l3 3" />
          </svg>
          <ActionText>添加笔记</ActionText>
          <svg width="14" height="14" viewBox="0 0 14 14" stroke="#70737c" strokeWidth="1.5"><path d="M7 0v14M0 7h14" /></svg>
        </Action>
      </Actions>
      <StatsTitle>关键统计</StatsTitle>
      <Stats>
        <StatName>成交量</StatName>
        <StatValue>51.995B</StatValue>
        <StatName>平均成交量(10)</StatName>
        <StatValue>—</StatValue>
      </Stats>
    </section>
  );
}

export default function App() {
  return (
    <Page>
      <Global />
      <ChartColumn>
        <PricePane />
        <MomentumPane />
        <MacdPane />
        <TrendPane />
        <RsiPane />
        <BandsPane />
        <SignalPane />
        <TimeRow>
          <TimeAxis>
            <Canvas>
              <AxisText x={17} y={26} textAnchor="middle">2023</AxisText>
              {months.map(([x, t]) => (
                <AxisText key={x} x={x} y={26} textAnchor="middle">{t}</AxisText>
              ))}
            </Canvas>
            <DateTag>周三 2023-02-08</DateTag>
          </TimeAxis>
          <AxisCorner>
            <PlainButton aria-label="Axis settings">
              <svg width="24" height="21" viewBox="0 0 24 21" fill="none" stroke={C.ink} strokeWidth="1.7">
                <path d="M6.500 1.500h11l5 9-5 9h-11l-5-9z" /><circle cx="12" cy="10.5" r="3" />
              </svg>
            </PlainButton>
          </AxisCorner>
        </TimeRow>
        <Footer>01:15:03 (UTC+11)</Footer>
      </ChartColumn>
      <Sidebar>
        <SidebarBody>
          <Watchlist />
          <Details />
        </SidebarBody>
        <Handle aria-label="Collapse sidebar"><Chevron size={10} /></Handle>
      </Sidebar>
    </Page>
  );
}
